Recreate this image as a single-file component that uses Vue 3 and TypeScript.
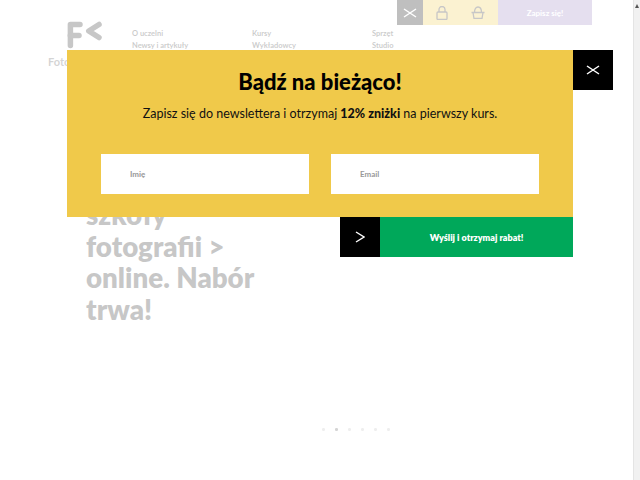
<script setup lang="ts">
const navColumns: string[][] = [
  ['O uczelni', 'Newsy i artykuły'],
  ['Kursy', 'Wykładowcy'],
  ['Sprzęt', 'Studio'],
]
const heroLines: string[] = ['szkoły', 'fotografii >', 'online. Nabór', 'trwa!']
const dots: number[] = [0, 1, 2, 3, 4, 5]
</script>

<template>
  <div class="window">
    <div class="page">
      <header class="top">
        <div class="brand">
          <svg class="logo" width="36" height="28" viewBox="0 0 36 28" fill="none" stroke="#202020" stroke-width="5.500" stroke-linecap="round" stroke-linejoin="round">
            <path d="M3.400 24.500V3.500H13" />
            <path d="M3.400 14.500H12" />
            <path d="M32 3.500L21.750 10L32 16.500" />
          </svg>
          <span class="brand-name">Fotografia</span>
        </div>
        <nav class="nav">
          <ul v-for="(col, i) in navColumns" :key="i" class="nav-col">
            <li v-for="item in col" :key="item">{{ item }}</li>
          </ul>
        </nav>
        <div class="bar">
          <button class="bar-close">
            <svg width="14" height="10" viewBox="0 0 14 10" stroke="#fff" stroke-width="1.500" fill="none"><path d="M1 1L13 9M13 1L1 9" /></svg>
          </button>
          <div class="bar-icons">
            <svg width="12" height="14" viewBox="0 0 12 14" fill="none" stroke="#202020" stroke-width="1.300"><rect x="1" y="6" width="10" height="7.500" rx="1" /><path d="M3 6V3.500a3 3 0 0 1 6 0V6" /></svg>
            <svg width="14" height="13" viewBox="0 0 14 13" fill="none" stroke="#202020" stroke-width="1.300"><path d="M.5 6.500h13M2 6.500l1 6h8l1-6M3.500 6.500C3.500 3 5 1 7 1s3.500 2 3.500 5.500" /></svg>
          </div>
          <button class="bar-sub">Zapisz się!</button>
        </div>
      </header>
      <section class="hero">
        <h1><span v-for="line in heroLines" :key="line">{{ line }}</span></h1>
      </section>
      <div class="dots"><i v-for="d in dots" :key="d" :class="{ on: d === 1 }"></i></div>
      <div class="veil"></div>
    </div>
    <div class="scrollbar"><span class="arrow"></span></div>

    <div class="modal">
      <div class="panel">
        <h2>Bądź na bieżąco!</h2>
        <p>Zapisz się do newslettera i otrzymaj <b>12% zniżki</b> na pierwszy kurs.</p>
        <form class="fields" @submit.prevent>
          <input type="text" placeholder="Imię" />
          <input type="email" placeholder="Email" />
        </form>
      </div>
      <div class="actions">
        <span class="go">
          <svg width="10" height="12" viewBox="0 0 10 12" fill="none" stroke="#fff" stroke-width="1.400"><path d="M1 1L9 6L1 11" /></svg>
        </span>
        <button class="send">Wyślij i otrzymaj rabat!</button>
      </div>
      <button class="close">
        <svg width="14" height="10" viewBox="0 0 14 10" stroke="#fff" stroke-width="1.500" fill="none"><path d="M1 1L13 9M13 1L1 9" /></svg>
      </button>
    </div>
  </div>
</template>

<style>
html, body { margin: 0; overflow: hidden; }
</style>

<style scoped>
* { box-sizing: border-box; }
.window {
  position: relative;
  display: flex;
  width: 640px;
  height: 480px;
  overflow: hidden;
  font-family: Lato, "Open Sans", sans-serif;
  background: #fff;
}
.page { position: relative; flex: 1; }
.scrollbar {
  width: 7px;
  background: #f1f1f1;
  border-left: 1px solid #e4e4e4;
  display: flex;
  justify-content: center;
  padding-top: 4px;
}
.arrow {
  width: 0;
  height: 0;
  border-left: 2px solid transparent;
  border-right: 2px solid transparent;
  border-bottom: 4px solid #555;
}
.veil { position: absolute; inset: 0; background: rgba(255, 255, 255, 0.75); }
.top { display: flex; height: 68px; }
.brand {
  width: 132px;
  flex: none;
  display: flex;
  flex-direction: column;
  padding: 21px 0 0 48px;
  gap: 7px;
}
.logo { flex: none; margin-left: 19px; }
.brand-name { flex: none; font-size: 11px; font-weight: 700; color: #555; line-height: 12px; }
.nav { display: flex; width: 265px; flex: none; padding-top: 28px; }
.nav-col {
  width: 120px;
  flex: none;
  margin: 0;
  padding: 0;
  list-style: none;
  font-size: 7.500px;
  font-weight: 700;
  line-height: 12px;
  color: #333;
}
.nav-col:last-child { width: 25px; }
.bar { display: flex; height: 25px; flex: none; }
.bar-close {
  width: 26px;
  border: 0;
  padding: 0;
  background: #000;
  display: flex;
  align-items: center;
  justify-content: center;
}
.bar-icons {
  width: 75px;
  background: #f0c94a;
  display: flex;
  align-items: center;
  justify-content: space-between;
  padding: 0 13px;
}
.bar-sub {
  width: 94px;
  border: 0;
  padding: 0;
  background: #9680c0;
  color: #fff;
  font: 700 8px Lato, sans-serif;
}
.hero { padding: 131px 0 0 86px; }
.hero h1 {
  margin: 0;
  font-size: 27.700px;
  font-weight: 800;
  line-height: 31.500px;
  color: #222;
}
.hero span { display: block; }
.dots {
  display: flex;
  gap: 10.500px;
  margin: 103px 0 0 322px;
  align-items: center;
}
.dots i { width: 2.500px; height: 2.500px; border-radius: 50%; background: #bbb; }
.dots i.on { background: #555; }
.modal {
  position: absolute;
  left: 67px;
  top: 50px;
  width: 506px;
}
.panel {
  height: 167px;
  background: #f0c94a;
  padding: 20px 34px 0;
  text-align: center;
  color: #000;
}
h2 { margin: 0; font-size: 22px; line-height: 24px; font-weight: 900; }
p { margin: 12px 0 0; font-size: 12.500px; line-height: 16px; color: #111; }
p b { font-weight: 900; }
.fields { display: flex; justify-content: space-between; margin-top: 32px; }
input {
  width: 208px;
  height: 40px;
  border: 0;
  border-radius: 0;
  outline: 0;
  background: #fff;
  padding: 0 0 0 29px;
  font: 700 8px Lato, sans-serif;
}
input::placeholder { color: #999; opacity: 1; }
.actions { display: flex; justify-content: flex-end; height: 40px; }
.go {
  width: 40px;
  background: #000;
  display: flex;
  align-items: center;
  justify-content: center;
}
.send {
  width: 193px;
  border: 0;
  padding: 0;
  background: #00a85a;
  color: #fff;
  font: 800 9px Lato, sans-serif;
}
.close {
  position: absolute;
  left: 100%;
  top: 0;
  width: 40px;
  height: 40px;
  border: 0;
  padding: 0;
  background: #000;
  display: flex;
  align-items: center;
  justify-content: center;
}
</style>
